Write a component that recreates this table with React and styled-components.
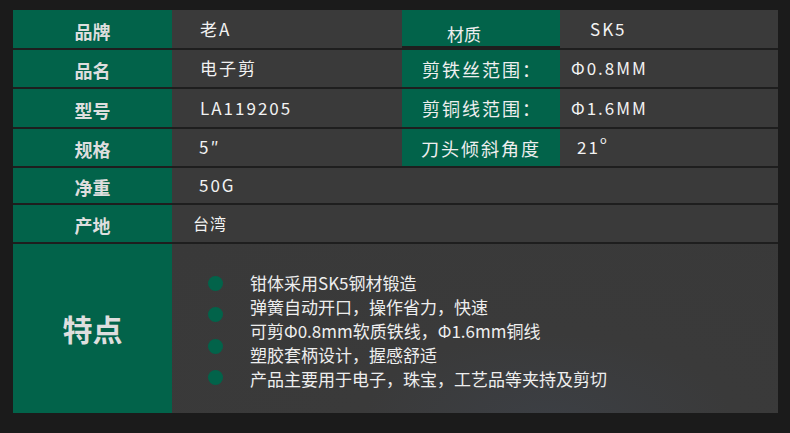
import React from "react";
import styled, { createGlobalStyle } from "styled-components";

const Global = createGlobalStyle`
  html, body { margin: 0; padding: 0; }
  body {
    background: #1b1b1b;
    font-family: "Noto Sans CJK SC", "Noto Sans", sans-serif;
    width: 790px;
    height: 433px;
    overflow: hidden;
  }
`;

const Page = styled.div`
  width: 790px;
  height: 433px;
  padding: 10px 12px 0 13px;
  box-sizing: border-box;
  background: #1b1b1b;
`;

const Table = styled.div`
  display: grid;
  grid-template-columns: 159px 230px 158px 218px;
  grid-template-rows: 38px 37px 38px 37px 35px 37px 169px;
  row-gap: 2px;
  background: #1e1e1e;
`;

const Label = styled.div`
  background: #02634a;
  color: #dedede;
  font-weight: 700;
  font-size: 18px;
  display: flex;
  align-items: center;
  justify-content: center;
  padding-top: ${(p) => p.$drop || 3}px;
  box-sizing: border-box;
`;

const SideLabel = styled.div`
  background: #02634a;
  color: #eeeeee;
  font-size: ${(p) => (p.$small ? 17 : 18)}px;
  letter-spacing: ${(p) => (p.$small ? 0 : 2)}px;
  display: flex;
  align-items: center;
  padding-left: ${(p) => p.$pad}px;
  padding-top: ${(p) => p.$drop || 0}px;
  box-sizing: border-box;
  height: ${(p) => (p.$h ? p.$h + "px" : "auto")};
`;

const Value = styled.div`
  background: #3a3a3a;
  color: #f2f2f2;
  font-size: ${(p) => (p.$small ? 16 : 17)}px;
  letter-spacing: ${(p) => (p.$small ? 1 : 2)}px;
  display: flex;
  align-items: center;
  padding-left: ${(p) => p.$pad}px;
  box-sizing: border-box;
  grid-column: ${(p) => p.$span || "auto"};
  padding-bottom: 2px;
`;

const Sup = styled.span`
  font-size: 11px;
  align-self: flex-start;
  margin-top: 2px;
  letter-spacing: 0;
`;

const BigLabel = styled(Label)`
  font-size: 30px;
  padding-top: 0;
  padding-bottom: 2px;
`;

const Features = styled.div`
  grid-column: 2 / 5;
  background: radial-gradient(ellipse at 62% 105%, #3c3f44 0%, #3a3a3a 35%, #393939 100%);
  display: flex;
  align-items: flex-start;
  padding: 27px 0 0 36px;
  box-sizing: border-box;
`;

const Bullets = styled.div`
  display: flex;
  flex-direction: column;
  gap: 16.5px;
  margin-top: 4.5px;
  width: 15px;
`;

const Dot = styled.span`
  width: 15px;
  height: 15px;
  border-radius: 50%;
  background: #02634a;
  display: block;
`;

const Lines = styled.div`
  margin-left: 27px;
  display: flex;
  flex-direction: column;
`;

const Line = styled.div`
  color: #eeeeee;
  font-size: 17px;
  line-height: 24px;
  white-space: nowrap;
`;

const features = [
  "钳体采用SK5钢材锻造",
  "弹簧自动开口，操作省力，快速",
  "可剪Φ0.8mm软质铁线，Φ1.6mm铜线",
  "塑胶套柄设计，握感舒适",
  "产品主要用于电子，珠宝，工艺品等夹持及剪切",
];

export default function App() {
  return (
    <>
      <Global />
      <Page>
        <Table>
          <Label>品牌</Label>
          <Value $pad={28}>老A</Value>
          <SideLabel $pad={45} $small $drop={10} $h={36}>材质</SideLabel>
          <Value $pad={30}>SK5</Value>

          <Label>品名</Label>
          <Value $pad={28}>电子剪</Value>
          <SideLabel $pad={20}>剪铁丝范围：</SideLabel>
          <Value $pad={11}>Φ0.8MM</Value>

          <Label>型号</Label>
          <Value $pad={28}>LA119205</Value>
          <SideLabel $pad={20}>剪铜线范围：</SideLabel>
          <Value $pad={11}>Φ1.6MM</Value>

          <Label>规格</Label>
          <Value $pad={27}>5″</Value>
          <SideLabel $pad={19}>刀头倾斜角度</SideLabel>
          <Value $pad={17}>
            21<Sup>o</Sup>
          </Value>

          <Label>净重</Label>
          <Value $pad={27} $span="2 / 5">50G</Value>

          <Label>产地</Label>
          <Value $pad={21} $small $span="2 / 5">台湾</Value>

          <BigLabel>特点</BigLabel>
          <Features>
            <Bullets>
              <Dot />
              <Dot />
              <Dot />
              <Dot />
            </Bullets>
            <Lines>
              {features.map((f) => (
                <Line key={f}>{f}</Line>
              ))}
            </Lines>
          </Features>
        </Table>
      </Page>
    </>
  );
}
